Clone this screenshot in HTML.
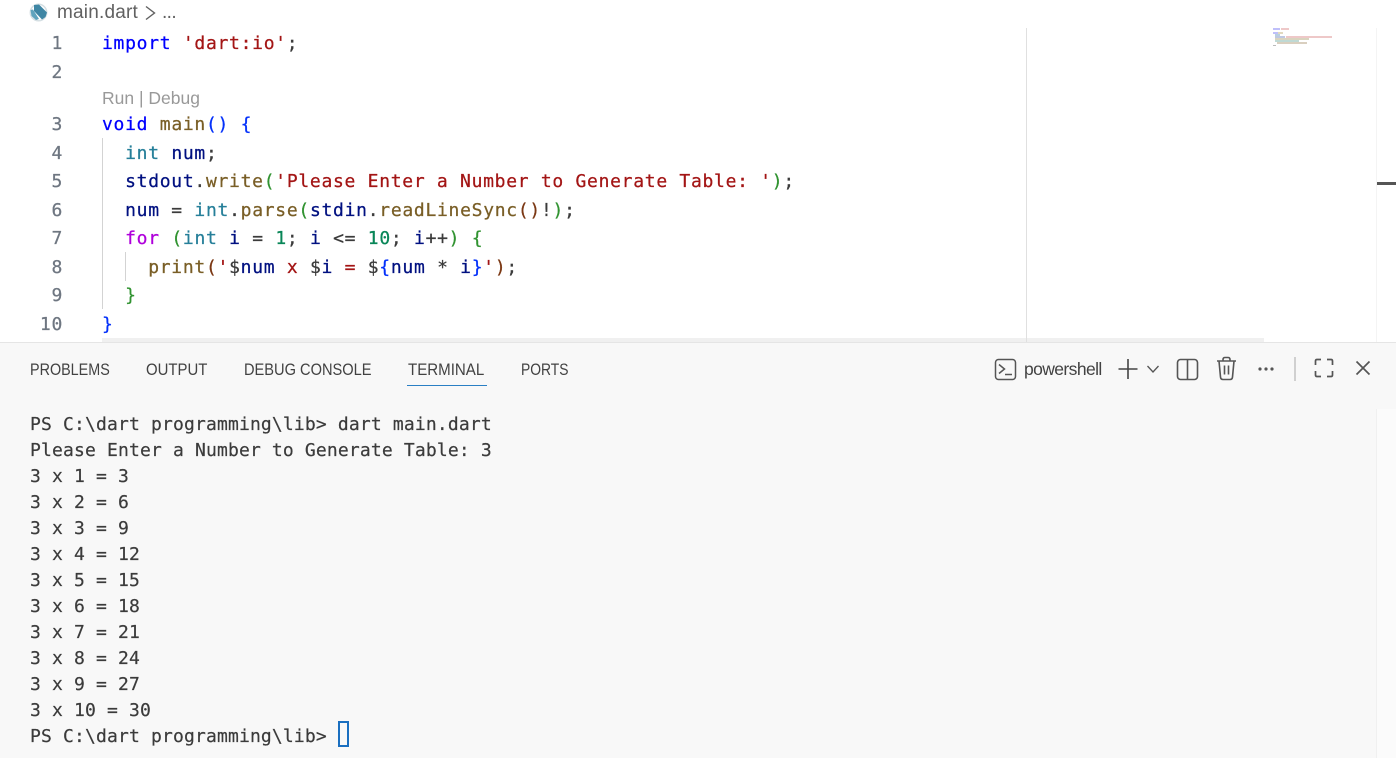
<!DOCTYPE html>
<html><head><meta charset="utf-8">
<style>
html,body{margin:0;padding:0;background:#fff;width:1396px;height:758px;overflow:hidden}
#r{position:relative;width:1396px;height:758px;overflow:hidden}
.a{position:absolute;white-space:pre}
.c{font-family:"DejaVu Sans Mono","Liberation Mono",monospace;font-size:18px;letter-spacing:.71px;height:28px;line-height:28px;left:102px;color:#001080;margin-top:1px;-webkit-text-stroke:.25px}
.n{font-family:"DejaVu Sans Mono","Liberation Mono",monospace;font-size:18px;letter-spacing:.71px;height:28px;line-height:28px;color:#6e7681;text-align:right;left:20px;width:43px;margin-top:1px;-webkit-text-stroke:.25px}
.t{font-family:"DejaVu Sans Mono","Liberation Mono",monospace;font-size:18px;letter-spacing:.16px;height:26px;line-height:26px;left:30px;color:#3b3b3b;margin-top:1px;-webkit-text-stroke:.2px}
.u{font-family:"Liberation Sans",sans-serif;color:#424242}
.tab{font-family:"Liberation Sans",sans-serif;font-size:16.5px;color:#424242;top:359px;line-height:22px;transform-origin:0 50%}
.b{color:#0000ff}.s{color:#a31515}.f{color:#795e26}.k{color:#267f99}.y{color:#af00db}.g{color:#098658}.p{color:#3b3b3b}.bb{color:#0431fa}.gr{color:#319331}.d{color:#7b3814}.v{color:#001080}
.m{position:absolute;height:2px;opacity:.55}
</style></head><body><div id="r">
<div class="a" style="left:0;top:343px;width:1396px;height:415px;background:#f8f8f8"></div>
<div class="a" style="left:102px;top:338px;width:1162px;height:5px;background:#f0f0f0"></div>
<div class="a" style="left:0;top:342px;width:1396px;height:1px;background:#e5e5e5"></div>
<div class="a" style="left:1026px;top:28px;width:1px;height:314px;background:#e0e0e0"></div>
<div class="a" style="left:1376px;top:28px;width:1px;height:314px;background:#f4f4f4"></div>
<div class="a" style="left:1377px;top:182px;width:19px;height:3px;background:#555"></div>
<div class="a" style="left:1376px;top:409px;width:20px;height:349px;background:#fbfbfb;border-left:1px solid #f0f0f0"></div>

<svg class="a" style="left:28px;top:2px" width="21" height="21" viewBox="0 0 21 21"><circle cx="10.500" cy="10.500" r="8.200" fill="#fff" stroke="#d5dfe3" stroke-width="1.500"/><path d="M6 3 L11 2.500 L19 10.500 L17.500 15 L14 17.500 L6 9Z" fill="#3f86a4"/><path d="M2.500 8 L5 7.500 L11 17 L8 18 L3.500 14Z" fill="#5fa3bd"/></svg>
<div class="a u" style="left:57px;top:1px;font-size:19px;line-height:24px;letter-spacing:.2px;color:#616161">main.dart</div>
<svg class="a" style="left:144px;top:5px" width="14" height="16" viewBox="0 0 14 16"><path d="M2 1.500 L10.500 8 L2 14.500" fill="none" stroke="#616161" stroke-width="1.400"/></svg>
<div class="a u" style="left:162px;top:1px;font-size:19px;line-height:24px;color:#616161;letter-spacing:-.6px">...</div>

<div class="a n" style="top:29px">1</div><div class="a c" style="top:29px"><span class="b">import</span> <span class="s">'dart:io'</span><span class="p">;</span></div>
<div class="a n" style="top:58px">2</div>
<div class="a u" style="left:102px;top:87px;font-size:17.5px;line-height:22px;color:#999;letter-spacing:0">Run | Debug</div>
<div class="a n" style="top:110px">3</div><div class="a c" style="top:110px"><span class="b">void</span> <span class="f">main</span><span class="bb">()</span> <span class="bb">{</span></div>
<div class="a n" style="top:139px">4</div><div class="a c" style="top:139px">  <span class="k">int</span> num<span class="p">;</span></div>
<div class="a n" style="top:167px">5</div><div class="a c" style="top:167px">  stdout<span class="p">.</span><span class="f">write</span><span class="gr">(</span><span class="s">'Please Enter a Number to Generate Table: '</span><span class="gr">)</span><span class="p">;</span></div>
<div class="a n" style="top:196px">6</div><div class="a c" style="top:196px">  num <span class="p">=</span> <span class="k">int</span><span class="p">.</span><span class="f">parse</span><span class="gr">(</span>stdin<span class="p">.</span><span class="f">readLineSync</span><span class="d">()</span><span class="p">!</span><span class="gr">)</span><span class="p">;</span></div>
<div class="a n" style="top:224px">7</div><div class="a c" style="top:224px">  <span class="y">for</span> <span class="gr">(</span><span class="k">int</span> i <span class="p">=</span> <span class="g">1</span><span class="p">;</span> i <span class="p">&lt;=</span> <span class="g">10</span><span class="p">;</span> i<span class="p">++</span><span class="gr">)</span> <span class="gr">{</span></div>
<div class="a n" style="top:253px">8</div><div class="a c" style="top:253px">    <span class="f">print</span><span class="d">(</span><span class="s">'</span><span class="p">$</span>num<span class="s"> x </span><span class="p">$</span>i<span class="s"> = </span><span class="p">$</span><span class="bb">{</span>num <span class="p">*</span> i<span class="bb">}</span><span class="s">'</span><span class="d">)</span><span class="p">;</span></div>
<div class="a n" style="top:281px">9</div><div class="a c" style="top:281px">  <span class="gr">}</span></div>
<div class="a n" style="top:310px">10</div><div class="a c" style="top:310px"><span class="bb">}</span></div>
<div class="a" style="left:102px;top:138px;width:1px;height:171px;background:#d3d3d3"></div>
<div class="a" style="left:125px;top:252px;width:1px;height:29px;background:#d3d3d3"></div>

<div class="m" style="left:1273px;top:28px;width:7px;background:#8a8af5"></div>
<div class="m" style="left:1281px;top:28px;width:8px;background:#e09a9a"></div>
<div class="m" style="left:1273px;top:32px;width:5px;background:#8a8af5"></div>
<div class="m" style="left:1278px;top:32px;width:5px;background:#c9b98a"></div>
<div class="m" style="left:1275px;top:34px;width:5px;background:#7fa8c9"></div>
<div class="m" style="left:1275px;top:36px;width:10px;background:#8a9ac9"></div>
<div class="m" style="left:1286px;top:36px;width:46px;background:#e09a9a"></div>
<div class="m" style="left:1275px;top:38px;width:34px;background:#b9b08a"></div>
<div class="m" style="left:1275px;top:40px;width:24px;background:#8ab9b0"></div>
<div class="m" style="left:1277px;top:42px;width:30px;background:#b9a88a"></div>
<div class="a" style="left:1273px;top:45px;width:3px;height:1px;background:#bbb"></div>

<div class="a tab" style="left:30px;transform:scaleX(.87)">PROBLEMS</div>
<div class="a tab" style="left:146px;transform:scaleX(.905)">OUTPUT</div>
<div class="a tab" style="left:244px;transform:scaleX(.886)">DEBUG CONSOLE</div>
<div class="a tab" style="left:408px;transform:scaleX(.914)">TERMINAL</div>
<div class="a" style="left:407px;top:385px;width:80px;height:1px;background:#2a7fc4"></div>
<div class="a tab" style="left:521px;transform:scaleX(.84)">PORTS</div>

<svg class="a" style="left:994px;top:358px" width="24" height="24" viewBox="0 0 24 24" fill="none" stroke="#555" stroke-width="1.500"><rect x="1.500" y="1.500" width="20" height="20" rx="3"/><path d="M5 6.500 L10.500 11 L5 15.500M11 16.500H18"/></svg>
<div class="a u" style="left:1024px;top:358px;font-size:17.5px;line-height:22px;letter-spacing:-.6px">powershell</div>
<svg class="a" style="left:1117px;top:357px" width="22" height="24" viewBox="0 0 22 24" stroke="#444" stroke-width="1.600" fill="none"><path d="M1.500 12H20.500M11 2V22"/></svg>
<svg class="a" style="left:1146px;top:363px" width="14" height="12" viewBox="0 0 14 12" stroke="#555" stroke-width="1.300" fill="none"><path d="M1.500 3 L7 9 L12.500 3"/></svg>
<svg class="a" style="left:1176px;top:358px" width="23" height="23" viewBox="0 0 23 23" stroke="#555" stroke-width="1.600" fill="none"><rect x="1.500" y="1.500" width="20" height="20" rx="3"/><path d="M11.500 1.500V21.500"/></svg>
<svg class="a" style="left:1216px;top:356px" width="21" height="25" viewBox="0 0 21 25" stroke="#555" stroke-width="1.600" fill="none"><path d="M1 5H20M7 5V3.500Q7 1.500 9 1.500H12Q14 1.500 14 3.500V5M3 5L4.500 21Q4.700 23.500 7 23.500H14Q16.300 23.500 16.500 21L18 5M8.500 9.500V18.500M12.500 9.500V18.500"/></svg>
<svg class="a" style="left:1257px;top:366px" width="18" height="6" viewBox="0 0 18 6" fill="#555"><circle cx="3" cy="3" r="1.600"/><circle cx="9" cy="3" r="1.600"/><circle cx="15" cy="3" r="1.600"/></svg>
<div class="a" style="left:1294px;top:357px;width:2px;height:24px;background:#d0d0d0"></div>
<svg class="a" style="left:1314px;top:358px" width="20" height="20" viewBox="0 0 20 20" stroke="#555" stroke-width="1.700" fill="none"><path d="M1.500 7V3Q1.500 1.500 3 1.500H7M13 1.500H17Q18.500 1.500 18.500 3V7M18.500 13V17Q18.500 18.500 17 18.500H13M7 18.500H3Q1.500 18.500 1.500 17V13"/></svg>
<svg class="a" style="left:1355px;top:360px" width="16" height="16" viewBox="0 0 16 16" stroke="#555" stroke-width="1.700" fill="none"><path d="M1.500 1.500L14.500 14.500M14.500 1.500L1.500 14.500"/></svg>

<div class="a t" style="top:411px">PS C:\dart programming\lib&gt; dart main.dart</div>
<div class="a t" style="top:437px">Please Enter a Number to Generate Table: 3</div>
<div class="a t" style="top:463px">3 x 1 = 3</div>
<div class="a t" style="top:489px">3 x 2 = 6</div>
<div class="a t" style="top:515px">3 x 3 = 9</div>
<div class="a t" style="top:541px">3 x 4 = 12</div>
<div class="a t" style="top:567px">3 x 5 = 15</div>
<div class="a t" style="top:593px">3 x 6 = 18</div>
<div class="a t" style="top:619px">3 x 7 = 21</div>
<div class="a t" style="top:645px">3 x 8 = 24</div>
<div class="a t" style="top:671px">3 x 9 = 27</div>
<div class="a t" style="top:697px">3 x 10 = 30</div>
<div class="a t" style="top:723px">PS C:\dart programming\lib&gt;</div>
<div class="a" style="left:338px;top:721px;width:7px;height:22px;border:2px solid #1a6fc0"></div>
</div></body></html>
